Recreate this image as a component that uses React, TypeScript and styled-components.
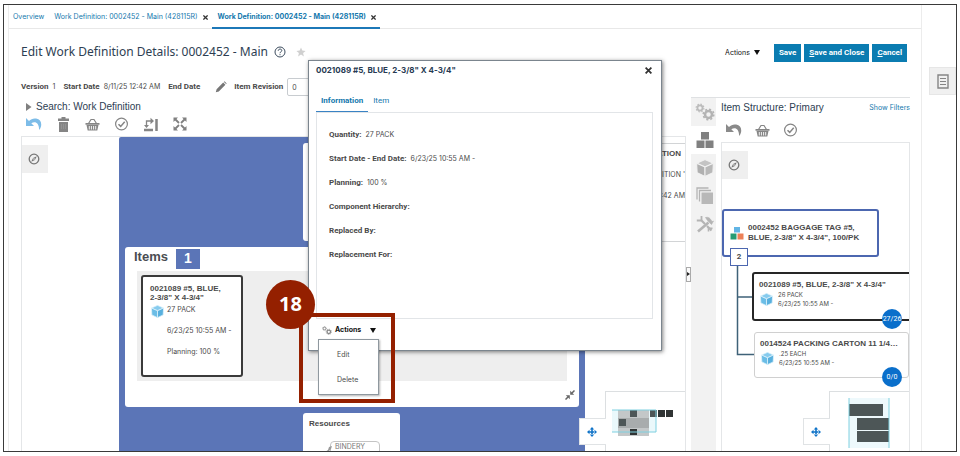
import React from "react";
import styled, { createGlobalStyle, css } from "styled-components";

const ARIAL = `"Liberation Sans", Arial, sans-serif`;
const TEXT = `Inter, "Liberation Sans", sans-serif`;
const LABEL = `Roboto, "Liberation Sans", sans-serif`;

const BLUE = "#5b75b7";
const RUST = "#942000";
const LINK = "#1478ad";

const GlobalStyle = createGlobalStyle`
  * { box-sizing: border-box; }
  body { margin: 0; background: #fff; }
  button, input { font: inherit; color: inherit; margin: 0; }
  button { background: none; border: 0; padding: 0; cursor: pointer; }
  a { text-decoration: none; }
  h1, h2, h3, p, dl, dd, ul { margin: 0; padding: 0; }
  svg { display: block; flex: none; }
`;

/* ---------- shell ---------- */

const Frame = styled.div`
  position: relative;
  display: flex;
  height: calc(100vh - 8px);
  margin: 4px 3px;
  border: 1px solid #3a3a3a;
  overflow: hidden;
  font: 7px/10px ${TEXT};
  color: #4a4a4a;
`;

const Page = styled.main`
  flex: 1;
  min-width: 0;
  display: flex;
  flex-direction: column;
  margin-left: 4px;
  border: solid #ececec;
  border-width: 0 1px;
`;

const Rail = styled.aside`
  width: 34px;
  padding: 62px 0 0 7px;
`;

const RailButton = styled.button`
  display: flex;
  align-items: center;
  justify-content: center;
  width: 100%;
  height: 28px;
  background: #f0f0f0;
  border: 1px solid #e6e6e6;
`;

const TabBar = styled.nav`
  display: flex;
  height: 24px;
  flex: none;
  border-bottom: 1px solid #e8e8e8;
`;

const PageTab = styled.div<{ $active?: boolean }>`
  display: flex;
  align-items: center;
  gap: 5px;
  padding: 2px 4px 0;
  height: 24px;
  border-bottom: 2px solid ${(p) => (p.$active ? "#1c78b8" : "transparent")};
  a {
    color: ${LINK};
    font-weight: ${(p) => (p.$active ? 700 : 400)};
    white-space: nowrap;
  }
  & + & { padding-left: 6px; }
`;

const Header = styled.header`
  display: flex;
  align-items: center;
  justify-content: space-between;
  height: 48px;
  flex: none;
  padding: 0 14px 3px 12px;
`;

const TitleGroup = styled.div`
  display: flex;
  align-items: center;
  gap: 6px;
  svg + svg { margin-left: 4px; }
`;

const Title = styled.h1`
  font: 400 12px/16px "Noto Sans", ${ARIAL};
  color: #2d3e52;
  white-space: nowrap;
`;

const HeaderActions = styled.div`
  display: flex;
  align-items: center;
  gap: 3px;
  padding-top: 2px;
`;

const MenuButton = styled.button<{ $strong?: boolean }>`
  display: flex;
  align-items: center;
  gap: ${(p) => (p.$strong ? 9 : 4)}px;
  font-weight: ${(p) => (p.$strong ? 700 : 400)};
  color: #111;
`;

const HeaderMenu = styled(MenuButton)`
  margin-right: 11px;
`;

const Primary = styled.button`
  height: 18px;
  padding: 0 5px;
  background: #0b7cb1;
  color: #fff;
  font: 700 8px/16px ${LABEL};
`;

const InfoRow = styled.div`
  display: flex;
  align-items: center;
  height: 20px;
  flex: none;
  padding-left: 12px;
  b { font: 700 8px/10px ${LABEL}; margin-right: 4px; }
  span { margin-right: 8px; }
`;

const Revision = styled.label`
  display: flex;
  align-items: center;
  margin-left: 7px;
`;

const RevisionInput = styled.input`
  width: 60px;
  height: 18px;
  padding: 0 4px;
  border: 1px solid #c8ccd0;
  border-radius: 2px;
`;

const EndDate = styled.b`
  && { margin-right: 15px; }
`;

/* ---------- workspace ---------- */

const Workspace = styled.div`
  flex: 1;
  min-height: 0;
  display: flex;
  padding: 0 11px 0 12px;
`;

const MainPane = styled.section`
  flex: 1;
  min-width: 0;
  display: flex;
  flex-direction: column;
`;

const PaneTitle = styled.h2`
  font: 400 10px/14px ${ARIAL};
  color: #2d3e52;
`;

const Disclosure = styled.div`
  display: flex;
  align-items: center;
  gap: 4px;
  padding: 3px 0 0 5px;
`;

const Tools = styled.div`
  display: flex;
  align-items: center;
  gap: 13px;
  padding-left: 5px;
`;

const MainTools = styled(Tools)`
  height: 22px;
  gap: 14px;
  padding-bottom: 2px;
`;

const SideTools = styled(Tools)`
  height: 27px;
  padding-top: 3px;
`;

const Canvas = styled.div`
  position: relative;
  flex: 1;
  overflow: hidden;
  border: solid #e4e6e8;
  border-width: 1px 1px 0 1px;
`;

const CompassButton = styled.button`
  position: absolute;
  left: 0;
  top: 8px;
  width: 26px;
  height: 28px;
  padding-right: 3px;
  background: #efefef;
  display: flex;
  align-items: center;
  justify-content: center;
`;

const Operation = styled.section`
  position: absolute;
  left: 97px;
  top: 0;
  bottom: 0;
  width: 466px;
  background: ${BLUE};
  border-radius: 2px 2px 0 0;
`;

const OperationHead = styled.div`
  position: absolute;
  left: 184px;
  top: 6px;
  width: 98px;
  height: 98px;
  background: #fff;
  border-radius: 3px;
`;

const ItemsPanel = styled.section`
  position: absolute;
  left: 6px;
  top: 110px;
  width: 454px;
  height: 160px;
  padding: 2px 12px 0;
  background: #fff;
  border-radius: 3px;
  & > svg { margin: 9px -8px 0 auto; }
`;

const ItemsHeading = styled.div`
  display: flex;
  align-items: center;
  gap: 8px;
  height: 20px;
  h3 { font: 700 13px/16px ${ARIAL}; color: #4a4d52; margin: -4px 0 0 -3px; }
  span {
    width: 24px;
    height: 20px;
    background: ${BLUE};
    color: #fff;
    font: 700 14px/18px ${ARIAL};
    text-align: center;
  }
`;

const ItemsLane = styled.div`
  display: flex;
  height: 110px;
  margin-top: 2px;
  padding: 4px;
  background: #eee;
`;

const ItemCard = styled.article`
  width: 102px;
  height: 102px;
  padding: 7px;
  background: #fff;
  border: 2px solid #3a3a3a;
  border-radius: 3px;
  display: grid;
  grid-template-columns: 13px 1fr;
  grid-template-rows: 18px 21px 21px 21px;
  column-gap: 4px;
  white-space: nowrap;
  h3 { grid-column: 1 / -1; font: 700 8px/9px ${ARIAL}; }
  svg { margin: 3px 0 0 1px; }
  p { grid-column: 2; padding-top: 3px; }
`;

const Resources = styled.section`
  position: absolute;
  left: 184px;
  top: 276px;
  bottom: 0;
  width: 97px;
  padding: 6px;
  background: #fff;
  border-radius: 3px 3px 0 0;
  overflow: hidden;
  h3 { font: 700 8px/10px ${ARIAL}; }
`;

const ResourceChip = styled.div`
  position: relative;
  width: 50px;
  height: 22px;
  margin: 12px 0 0 21px;
  padding: 0 4px;
  border: 1px solid #c4c4c4;
  border-radius: 4px;
  color: #777;
  svg { position: absolute; left: -6px; top: 3px; }
`;

const NextOperation = styled.article`
  position: absolute;
  right: 0;
  top: 6px;
  width: 74px;
  height: 99px;
  padding: 5px 0;
  border: solid #d2d4d6;
  border-width: 1px 0;
  white-space: nowrap;
  display: flex;
  flex-direction: column;
  align-items: flex-end;
  gap: 11px;
  h3 { font: 700 8px/10px ${ARIAL}; margin-right: 4px; }
`;

const MiniMap = styled.div`
  position: absolute;
  right: 0;
  bottom: 0;
  width: 80px;
  height: 60px;
  background: #fff;
  border: solid #dcdfe1;
  border-width: 1px 0 0 1px;
`;

const MoveButton = styled.button`
  position: absolute;
  left: -27px;
  top: 26px;
  width: 27px;
  height: 27px;
  padding-right: 2px;
  background: #fff;
  border: solid #e0e3e5;
  border-width: 1px 0 1px 1px;
  display: flex;
  align-items: center;
  justify-content: center;
`;

const Splitter = styled.div`
  width: 5px;
  display: flex;
  align-items: center;
  button {
    width: 5px;
    height: 15px;
    background: #fafafa;
    border: 1px solid #aaa;
  }
`;

const SidePane = styled.aside`
  display: flex;
  width: 219px;
  border-top: 1px solid #dfe1e3;
`;

const IconStrip = styled.div`
  width: 25px;
  background: #f2f2f2;
  flex: none;
`;

const StripButton = styled.button<{ $active?: boolean }>`
  display: flex;
  align-items: center;
  justify-content: center;
  width: 25px;
  height: 28px;
  padding-left: 3px;
  background: ${(p) => (p.$active ? "#fff" : "transparent")};
`;

const Structure = styled.section`
  flex: 1;
  min-width: 0;
  margin-left: 5px;
  display: flex;
  flex-direction: column;
`;

const StructureHead = styled.div`
  display: flex;
  align-items: center;
  justify-content: space-between;
  padding-top: 3px;
  a { color: ${LINK}; }
`;

const Tree = styled.div`
  position: absolute;
  left: 0;
  top: 66px;
  width: 188px;
  & > svg { position: absolute; left: 14px; top: 44px; }
`;

const RootNode = styled.article`
  position: relative;
  display: flex;
  align-items: center;
  gap: 4px;
  width: 157px;
  height: 48px;
  padding-left: 6px;
  border: 2px solid #4c67b0;
  border-radius: 3px;
  background: #fff;
  h3 { font: 700 8px/10px ${ARIAL}; white-space: nowrap; }
`;

const ChildCount = styled.span`
  position: absolute;
  left: 6px;
  top: 37px;
  width: 18px;
  height: 18px;
  border: 1px solid #4c67b0;
  background: #fff;
  font: 700 8px/16px ${LABEL};
  text-align: center;
`;

const ChildNode = styled.article<{ $selected?: boolean }>`
  position: relative;
  width: ${(p) => (p.$selected ? 162 : 155)}px;
  height: ${(p) => (p.$selected ? 49 : 46)}px;
  margin: ${(p) => (p.$selected ? "15px 0 0 30px" : "11px 0 0 32px")};
  padding: 6px 5px;
  background: #fff;
  border-radius: 3px;
  ${(p) => p.$selected
    ? css`border: 2px solid #262626;`
    : css`border: 1px solid #d0d0d0;`}
  font: 6px/9px ${TEXT};
  h3 { font: 700 8px/10px ${ARIAL}; white-space: nowrap; }
`;

const ChildBody = styled.div`
  display: flex;
  align-items: center;
  gap: 5px;
  padding-left: 1px;
`;

const Ratio = styled.span<{ $selected?: boolean }>`
  position: absolute;
  left: ${(p) => (p.$selected ? 128 : 127)}px;
  top: ${(p) => (p.$selected ? 35 : 34)}px;
  width: 20px;
  height: 20px;
  border-radius: 50%;
  background: #0a6fcb;
  color: #fff;
  font: 7px/20px ${LABEL};
  text-align: center;
`;

/* ---------- dialog ---------- */

const Dialog = styled.section`
  position: absolute;
  left: 304px;
  top: 55px;
  width: 354px;
  height: 291px;
  padding: 0 7px;
  display: flex;
  flex-direction: column;
  background: #fff;
  border: 1px solid #7b858e;
  box-shadow: 1px 1px 4px rgba(0, 0, 0, 0.5);
`;

const DialogHead = styled.header`
  display: flex;
  align-items: center;
  justify-content: space-between;
  height: 18px;
  padding-right: 2px;
  h2 { font: 700 8px/12px ${TEXT}; color: #263a52; }
`;

const DialogTabs = styled.div`
  display: flex;
  height: 34px;
  align-items: flex-end;
`;

const DialogTab = styled.button<{ $active?: boolean }>`
  height: 22px;
  padding: 0 5px;
  color: ${LINK};
  font: ${(p) => (p.$active ? 700 : 400)} 8px/10px ${LABEL};
  border-bottom: 2px solid ${(p) => (p.$active ? "#3a83c4" : "transparent")};
`;

const Fields = styled.dl`
  flex: 1;
  margin-right: 1px;
  margin-top: -1px;
  padding: 10px 12px;
  border: 1px solid #e2e5e8;
  div { display: flex; align-items: center; gap: 4px; height: 24px; }
  dt { font: 700 8px/10px ${LABEL}; }
`;

const DialogFoot = styled.footer`
  position: relative;
  height: 31px;
  padding: 6px 0 0 6px;
`;

const ActionTrigger = styled.div`
  display: flex;
  align-items: center;
  gap: 3px;
`;

const Menu = styled.ul`
  position: absolute;
  left: 2px;
  top: 20px;
  width: 61px;
  height: 56px;
  padding: 2px 0;
  list-style: none;
  background: #fff;
  border: 1px solid #8f989f;
  box-shadow: 1px 1px 2px rgba(0, 0, 0, 0.3);
  button { width: 100%; height: 25px; padding-left: 18px; text-align: left; }
`;

const Callout = styled.div`
  position: absolute;
  left: 295px;
  top: 308px;
  width: 96px;
  height: 90px;
  border: 4px solid ${RUST};
  pointer-events: none;
`;

const StepNumber = styled.div`
  position: absolute;
  left: 262px;
  top: 275px;
  width: 49px;
  height: 49px;
  border-radius: 50%;
  background: ${RUST};
  color: #fff;
  font: 700 20px/48px "Open Sans", sans-serif;
  text-align: center;
`;

/* ---------- icons ---------- */

const Close = ({ size = 5, color = "#333" }) => (
  <svg width={size} height={size} viewBox="0 0 6 6" stroke={color} strokeWidth="1.5">
    <path d="M.5.5l5 5M5.5.5l-5 5" />
  </svg>
);
const Caret = () => (
  <svg width="6" height="5" viewBox="0 0 6 5"><path d="M0 0h6L3 5z" fill="#111" /></svg>
);
const Undo = ({ color = "#8a8a8a" }) => (
  <svg width="16" height="14" viewBox="0 0 16 14">
    <path d="M0 1v8h8L5.300 6.300C9 3.800 13 5.500 13.200 13c3.500-4.500 2.500-10.500-3-11.400C7.400 1.100 5 2 3 4z" fill={color} />
  </svg>
);
const Trash = () => (
  <svg width="15" height="15" viewBox="0 0 15 15" fill="#858585">
    <path d="M5.500 0h4v1.500H13V4H2V1.500h3.500zM3 5h9v10H3z" />
    <path d="M5.500 7v5M7.500 7v5M9.500 7v5" stroke="#9c9c9c" strokeWidth=".6" />
  </svg>
);
const Basket = () => (
  <svg width="15" height="13" viewBox="0 0 15 13">
    <path d="M3.500 5.500L6 1.500h3l2.500 4" fill="none" stroke="#858585" strokeWidth="1.200" />
    <path d="M.5 5h14v1.800h-14zM1.500 7h12l-1.200 5.500H2.700z" fill="#858585" />
    <path d="M4.300 8v3.500M6.400 8v3.500M8.600 8v3.500M10.700 8v3.500" stroke="#fff" strokeWidth=".9" />
  </svg>
);
const Check = () => (
  <svg width="15" height="14" viewBox="0 0 15 14" fill="none" stroke="#858585">
    <circle cx="7.500" cy="7" r="5.900" strokeWidth="1.200" />
    <path d="M4.500 7.200l2.200 2.200 4-4.600" strokeWidth="1.500" />
  </svg>
);
const Rotate = () => (
  <svg width="16" height="15" viewBox="0 0 16 15" fill="none" stroke="#858585">
    <path d="M13.500 2v12M1 13h9" strokeWidth="2.500" />
    <path d="M3.500 10V4h5" strokeWidth="1.300" />
    <path d="M7.500.8v6.400L11 4zM1 8h5l-2.500 3z" fill="#858585" stroke="none" />
  </svg>
);
const Expand = () => (
  <svg width="14" height="14" viewBox="0 0 14 14">
    <path d="M2 2l4 4M12 2L8 6M2 12l4-4M12 12L8 8" stroke="#808080" strokeWidth="1.800" />
    <path d="M.5.5H5l-4.500 4.500zM13.500.5H9l4.500 4.500zM.5 13.500H5L.5 9zM13.500 13.500H9L13.500 9z" fill="#808080" />
  </svg>
);
const Compass = () => (
  <svg width="12" height="12" viewBox="0 0 12 12">
    <circle cx="6" cy="6" r="4.800" fill="none" stroke="#777" strokeWidth="1.300" />
    <path d="M8.800 3.200L6.900 6.900 3.200 8.800 5.100 5.100z" fill="#777" />
    <circle cx="6" cy="6" r=".8" fill="#eee" />
  </svg>
);
const Cube = ({ size = 13, top = "#86cbee", left = "#6bbde6", right = "#58b0de", line = "#e3f4fc" }) => (
  <svg width={size} height={size} viewBox="0 0 14 14" stroke={line} strokeWidth=".8" strokeLinejoin="round">
    <path d="M7 .4l6.500 2.900L7 6.200.5 3.300z" fill={top} />
    <path d="M.5 3.300L7 6.200v7.400L.9 10.700z" fill={left} />
    <path d="M13.500 3.300L7 6.200v7.400l6.100-2.900z" fill={right} />
  </svg>
);
const Gear = ({ x, y, r, color }: { x: number; y: number; r: number; color: string }) => (
  <g transform={`translate(${x} ${y})`} fill="none" stroke={color}>
    <circle r={r * 0.58} strokeWidth={r * 0.42} />
    <circle r={r * 0.88} strokeWidth={r * 0.26} strokeDasharray={`${r * 0.345}`} />
  </g>
);
const Gears = () => (
  <svg width="20" height="18" viewBox="0 0 20 18">
    <Gear x={5} y={5} r={4.400} color="#bcbcbc" />
    <Gear x={13.500} y={11.500} r={6} color="#b4b4b4" />
  </svg>
);
const SmallGears = () => (
  <svg width="10" height="9" viewBox="0 0 10 9">
    <Gear x={2.500} y={2.500} r={2.300} color="#888" />
    <Gear x={6.800} y={5.800} r={3} color="#888" />
  </svg>
);
const Blocks = () => (
  <svg width="18" height="18" viewBox="0 0 18 18" fill="#808080">
    <path d="M5 1h8v7.500H5zM.5 9.500h8V17h-8zM9.500 9.500h8V17h-8z" />
  </svg>
);
const Stack = () => (
  <svg width="18" height="18" viewBox="0 0 18 18">
    <path d="M1 12.500V1h11.500M3.500 14.500v-11H15" fill="none" stroke="#b4b4b4" strokeWidth="1.300" />
    <path d="M5.500 5.500H17V17H5.500z" fill="#b8b8b8" />
  </svg>
);
const Wrench = () => (
  <svg width="18" height="18" viewBox="0 0 18 18" fill="none" stroke="#b4b4b4">
    <path d="M5 5l4 4M11 11l4.500 4.500" strokeWidth="2.200" />
    <path d="M12.500 7.500L2 16.500" strokeWidth="2.600" />
    <path d="M.8 5.500h3.700l1-1V1" strokeWidth="1.800" />
    <path d="M9.500 2.500c2.500-.8 4.500.5 5.500 2.500s2 1.500 2.500 1l-2 3.500-4-4z" fill="#b4b4b4" strokeWidth=".6" />
    <path d="M12.500 16.500v-3.200h4" strokeWidth="1.600" />
  </svg>
);
const ColorBlocks = () => (
  <svg width="14" height="14" viewBox="0 0 14 14">
    <path d="M4 1h6v5.500H4z" fill="#62b5e5" />
    <path d="M.5 7.500h6v6h-6z" fill="#259b73" />
    <path d="M7.500 7.500h6v6h-6z" fill="#ec8058" />
  </svg>
);
const Move = () => (
  <svg width="10" height="10" viewBox="0 0 10 10" fill="#0f73c8">
    <path d="M4.200 2h1.600v6H4.200zM2 4.200h6v1.600H2zM5 0l2.200 2.500H2.800zM5 10l2.200-2.500H2.800zM0 5l2.500-2.200v4.400zM10 5L7.500 2.800v4.400z" />
  </svg>
);
const Notes = () => (
  <svg width="12" height="15" viewBox="0 0 12 15" fill="none" stroke="#858585">
    <path d="M1 1h10v13H1z" strokeWidth="1.400" />
    <path d="M3 4.500h6M3 7.500h6M3 10.500h6" strokeWidth="1.200" />
  </svg>
);
const Collapse = () => (
  <svg width="10" height="10" viewBox="0 0 10 10">
    <path d="M.5 9.500L3 7M9.500.5L7 3" stroke="#666" strokeWidth="1.500" />
    <path d="M.8 5.200h4v4zM5.200.8v4h4z" fill="#666" />
  </svg>
);

/* ---------- data ---------- */

const fields: [string, string?][] = [
  ["Quantity:", "27 PACK"],
  ["Start Date - End Date:", "6/23/25 10:55 AM -"],
  ["Planning:", "100 %"],
  ["Component Hierarchy:"],
  ["Replaced By:"],
  ["Replacement For:"],
];

const components = [
  { name: `0021089 #5, BLUE, 2-3/8" X 4-3/4"`, qty: "26 PACK", date: "6/23/25 10:55 AM -", ratio: "27/26", selected: true },
  { name: "0014524 PACKING CARTON 11 1/4…", qty: ".25 EACH", date: "6/23/25 10:55 AM -", ratio: "0/0", selected: false },
];

export default function App() {
  return (
    <>
      <GlobalStyle />
      <Frame>
        <Page>
          <TabBar>
            <PageTab><a href="#overview">Overview</a></PageTab>
            <PageTab>
              <a href="#first">Work Definition: 0002452 - Main (428115R)</a>
              <button aria-label="Close tab"><Close /></button>
            </PageTab>
            <PageTab $active>
              <a href="#second">Work Definition: 0002452 - Main (428115R)</a>
              <button aria-label="Close tab"><Close /></button>
            </PageTab>
          </TabBar>

          <Header>
            <TitleGroup>
              <Title>Edit Work Definition Details: 0002452 - Main</Title>
              <svg width="12" height="12" viewBox="0 0 12 12" fill="none" stroke="#3c4c5e">
                <circle cx="6" cy="6" r="5" />
                <path d="M4.200 4.800c0-2.300 3.600-2.300 3.600-.2C7.800 5.800 6 5.700 6 7.200M6 8.200v1" />
              </svg>
              <svg width="10" height="10" viewBox="0 0 10 10" fill="#d0d0d0">
                <path d="M5 .5l1.300 3.100 3.300.3-2.500 2.200.8 3.300L5 7.600 2.100 9.400l.8-3.300L.4 3.900l3.300-.3z" />
              </svg>
            </TitleGroup>
            <HeaderActions>
              <HeaderMenu>Actions <Caret /></HeaderMenu>
              <Primary>Save</Primary>
              <Primary><u>S</u>ave and Close</Primary>
              <Primary><u>C</u>ancel</Primary>
            </HeaderActions>
          </Header>

          <InfoRow>
            <b>Version</b><span>1</span>
            <b>Start Date</b><span>8/11/25 12:42 AM</span>
            <EndDate>End Date</EndDate>
            <button aria-label="Edit">
              <svg width="12" height="12" viewBox="0 0 12 12" fill="#777">
                <path d="M.8 11.200l.8-3L8.200 1.600l2.200 2.200-6.600 6.600zM8.900.9l.7-.6 2.100 2.100-.6.700z" />
              </svg>
            </button>
            <Revision><b>Item Revision</b><RevisionInput defaultValue="0" /></Revision>
          </InfoRow>

          <Workspace>
            <MainPane>
              <Disclosure>
                <svg width="6" height="8" viewBox="0 0 6 8"><path d="M0 0l5.500 4L0 8z" fill="#808080" /></svg>
                <PaneTitle>Search: Work Definition</PaneTitle>
              </Disclosure>
              <MainTools>
                <button aria-label="Undo"><Undo color="#7dbce8" /></button>
                <button aria-label="Delete"><Trash /></button>
                <button aria-label="Add items"><Basket /></button>
                <button aria-label="Validate"><Check /></button>
                <button aria-label="Change orientation"><Rotate /></button>
                <button aria-label="Fit"><Expand /></button>
              </MainTools>
              <Canvas>
                <CompassButton aria-label="Navigate"><Compass /></CompassButton>
                <Operation>
                  <OperationHead />
                  <ItemsPanel>
                    <ItemsHeading><h3>Items</h3><span>1</span></ItemsHeading>
                    <ItemsLane>
                      <ItemCard>
                        <h3>0021089 #5, BLUE,<br />2-3/8" X 4-3/4"</h3>
                        <Cube />
                        <p>27 PACK</p>
                        <p>6/23/25 10:55 AM -</p>
                        <p>Planning: 100 %</p>
                      </ItemCard>
                    </ItemsLane>
                    <Collapse />
                  </ItemsPanel>
                  <Resources>
                    <h3>Resources</h3>
                    <ResourceChip>
                      <svg width="8" height="8" viewBox="0 0 8 8"><path d="M0 7l3-2 1-3 3-1-1 3-3 3z" fill="#999" /></svg>
                      BINDERY
                    </ResourceChip>
                  </Resources>
                </Operation>
                <NextOperation>
                  <h3>OPERATION</h3>
                  <p>POSITION '</p>
                  <p>8/11/25 12:42 AM</p>
                </NextOperation>
                <MiniMap>
                  <MoveButton aria-label="Move"><Move /></MoveButton>
                  <svg width="78" height="58" viewBox="0 0 78 58">
                    <path d="M6 18h44v22H6z" fill="#eaf8fb" />
                    <path d="M12 18h31v26H12z" fill="#c3c7c8" />
                    <path d="M12 26h31v10H12z" fill="#a8acad" />
                    <path d="M24 18h7v7h-7zM13 27h7v7h-7zM44 18h7v7h-7z" fill="#4d5657" />
                    <path d="M24 37h7v6h-7zM52 18h7v7h-7zM60 18h7v7h-7z" fill="#303434" />
                    <path d="M6 18h44v22H6" fill="none" stroke="#7fd0e0" />
                  </svg>
                </MiniMap>
              </Canvas>
            </MainPane>

            <Splitter>
              <button aria-label="Resize panels">
                <svg width="3" height="4" viewBox="0 0 3 4"><path d="M0 0l3 2-3 2z" fill="#222" /></svg>
              </button>
            </Splitter>

            <SidePane>
              <IconStrip>
                <StripButton aria-label="Operations"><Gears /></StripButton>
                <StripButton $active aria-label="Item structure"><Blocks /></StripButton>
                <StripButton aria-label="Items"><Cube size={18} top="#c4c4c4" left="#b0b0b0" right="#b8b8b8" line="#f2f2f2" /></StripButton>
                <StripButton aria-label="Copies"><Stack /></StripButton>
                <StripButton aria-label="Resources"><Wrench /></StripButton>
              </IconStrip>
              <Structure>
                <StructureHead>
                  <PaneTitle>Item Structure: Primary</PaneTitle>
                  <a href="#filters">Show Filters</a>
                </StructureHead>
                <SideTools>
                  <button aria-label="Undo"><Undo /></button>
                  <button aria-label="Add items"><Basket /></button>
                  <button aria-label="Validate"><Check /></button>
                </SideTools>
                <Canvas>
                  <CompassButton aria-label="Navigate"><Compass /></CompassButton>
                  <Tree>
                    <svg width="20" height="104" viewBox="0 0 20 104" fill="none" stroke="#3f6278" strokeWidth="1.500">
                      <path d="M1.500 0v101.500H20M1.500 44H20" />
                    </svg>
                    <RootNode>
                      <ColorBlocks />
                      <h3>0002452 BAGGAGE TAG #5,<br />BLUE, 2-3/8" X 4-3/4", 100/PK</h3>
                      <ChildCount>2</ChildCount>
                    </RootNode>
                    {components.map((c) => (
                      <ChildNode key={c.name} $selected={c.selected}>
                        <h3>{c.name}</h3>
                        <ChildBody>
                          <Cube />
                          <div><p>{c.qty}</p><p>{c.date}</p></div>
                        </ChildBody>
                        <Ratio $selected={c.selected}>{c.ratio}</Ratio>
                      </ChildNode>
                    ))}
                  </Tree>
                  <MiniMap>
                    <MoveButton aria-label="Move"><Move /></MoveButton>
                    <svg width="78" height="58" viewBox="0 0 78 58">
                      <path d="M19 6h40v50H19z" fill="#eef9fc" />
                      <path d="M19 12h34v12H19zM27 26h32v12H27zM27 39h32v11H27z" fill="#4d5657" />
                      <path d="M19 6v50M59 6v50" stroke="#7fd0e0" />
                    </svg>
                  </MiniMap>
                </Canvas>
              </Structure>
            </SidePane>
          </Workspace>
        </Page>

        <Rail>
          <RailButton aria-label="Notes"><Notes /></RailButton>
        </Rail>

        <Dialog role="dialog" aria-labelledby="dialog-title">
          <DialogHead>
            <h2 id="dialog-title">0021089 #5, BLUE, 2-3/8" X 4-3/4"</h2>
            <button aria-label="Close"><Close size={7} /></button>
          </DialogHead>
          <DialogTabs>
            <DialogTab $active>Information</DialogTab>
            <DialogTab>Item</DialogTab>
          </DialogTabs>
          <Fields>
            {fields.map(([label, value]) => (
              <div key={label}><dt>{label}</dt>{value && <dd>{value}</dd>}</div>
            ))}
          </Fields>
          <DialogFoot>
            <ActionTrigger>
              <SmallGears />
              <MenuButton $strong>Actions <Caret /></MenuButton>
            </ActionTrigger>
            <Menu>
              <li><button>Edit</button></li>
              <li><button>Delete</button></li>
            </Menu>
          </DialogFoot>
        </Dialog>
        <Callout />
        <StepNumber>18</StepNumber>
      </Frame>
    </>
  );
}
